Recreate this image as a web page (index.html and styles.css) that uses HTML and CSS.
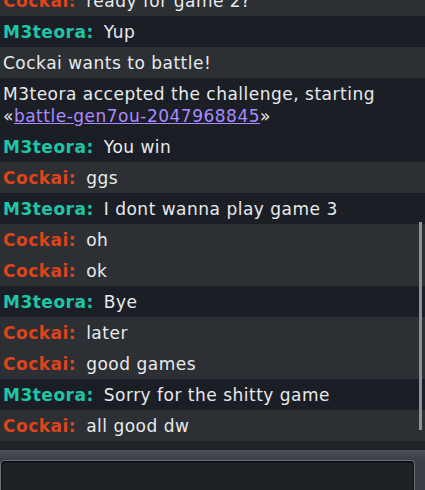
FILE: index.html
```html
<!DOCTYPE html>
<html>
<head>
<meta charset="utf-8">
<link rel="stylesheet" href="styles.css">
</head>
<body>
<div class="app">
  <div class="chat">
    <div class="msg light"><b class="c">Cockai:</b><span class="t">ready for game 2?</span></div>
    <div class="msg dark"><b class="m">M3teora:</b><span class="t">Yup</span></div>
    <div class="msg light">Cockai wants to battle!</div>
    <div class="msg dark">M3teora accepted the challenge, starting <span class="nw">«<a class="link" href="#">battle-gen7ou-2047968845</a>»</span></div>
    <div class="msg dark"><b class="m">M3teora:</b><span class="t">You win</span></div>
    <div class="msg light"><b class="c">Cockai:</b><span class="t">ggs</span></div>
    <div class="msg dark"><b class="m">M3teora:</b><span class="t">I dont wanna play game 3</span></div>
    <div class="msg light"><b class="c">Cockai:</b><span class="t">oh</span></div>
    <div class="msg light"><b class="c">Cockai:</b><span class="t">ok</span></div>
    <div class="msg dark"><b class="m">M3teora:</b><span class="t">Bye</span></div>
    <div class="msg light"><b class="c">Cockai:</b><span class="t">later</span></div>
    <div class="msg light"><b class="c">Cockai:</b><span class="t">good games</span></div>
    <div class="msg dark"><b class="m">M3teora:</b><span class="t">Sorry for the shitty game</span></div>
    <div class="msg light"><b class="c">Cockai:</b><span class="t">all good dw</span></div>
    <div class="scrollbar"></div>
  </div>
  <div class="gap"></div>
  <div class="bar"></div>
  <div class="inputwrap"><div class="input"></div></div>
</div>
</body>
</html>
```
FILE: styles.css
```css
html, body {
  margin: 0;
  padding: 0;
  background: #1c1f24;
}
.app {
  width: 425px;
  height: 490px;
  display: flex;
  flex-direction: column;
  overflow: hidden;
  font-family: "DejaVu Sans", Verdana, sans-serif;
  font-size: 17px;
  letter-spacing: 0.5px;
  color: #e8eaec;
}
.chat {
  position: relative;
  height: 441px;
  flex: none;
  overflow: hidden;
  display: flex;
  flex-direction: column;
  justify-content: flex-end;
}
.msg {
  flex: none;
  padding: 5px 6px 4px 3px;
  line-height: 22px;
}
.light { background: #2c3035; }
.dark { background: #1b1f25; }
.c { color: #dd4419; font-weight: bold; }
.m { color: #20c4a6; font-weight: bold; }
.t { margin-left: 10px; }
.nw { white-space: nowrap; }
.link { color: #a98bff; text-decoration: underline; }
.scrollbar {
  position: absolute;
  right: 3px;
  top: 222px;
  width: 3px;
  height: 208px;
  background: #8e9196;
}
.gap {
  height: 9px;
  flex: none;
  background: #1f2227;
}
.bar {
  height: 10px;
  flex: none;
  background: linear-gradient(#4a5057, #3b4046);
}
.inputwrap {
  flex: 1;
  background: #3b4046;
  padding-right: 10px;
}
.input {
  height: 40px;
  border: 1px solid #6a7078;
  border-radius: 4px;
  background: #1e2125;
  box-shadow: inset 0 1px 2px #000;
}
```
